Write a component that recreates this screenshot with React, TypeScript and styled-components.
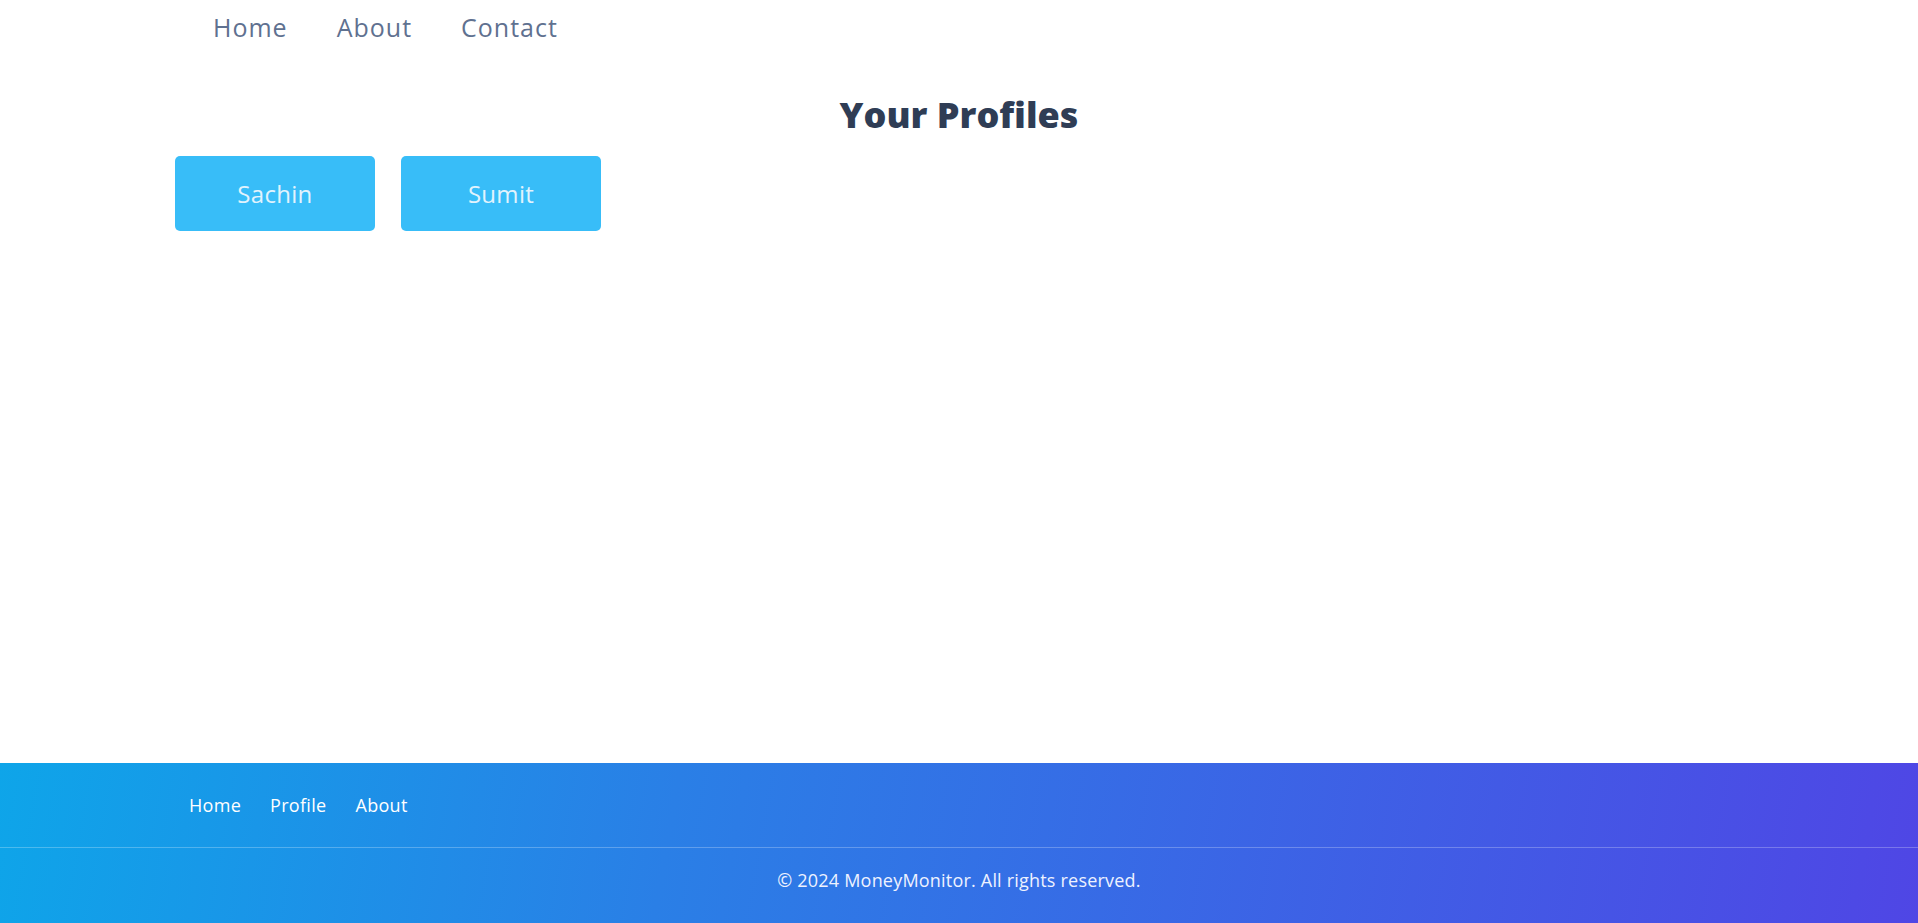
import React from "react";
import styled, { createGlobalStyle } from "styled-components";

const GlobalStyle = createGlobalStyle`
  html, body { margin: 0; padding: 0; background: #ffffff; }
  body { font-family: "Open Sans", "Noto Sans", Arial, sans-serif; }
  * { box-sizing: border-box; }
`;

const Page = styled.div`
  min-height: 100vh;
  display: flex;
  flex-direction: column;
`;

const Container = styled.div`
  max-width: 1600px;
  width: 100%;
  margin: 0 auto;
  padding: 0 16px;
`;

const TopNav = styled.nav`
  display: flex;
  gap: 49px;
  padding: 7px 0 0 38px;
  height: 54px;
`;

const TopLink = styled.a`
  font-size: 25px;
  letter-spacing: 1px;
  color: #5f7190;
  text-decoration: none;
  line-height: 40px;
`;

const Main = styled.main`
  flex: 1;
`;

const Title = styled.h1`
  margin: 39px 0 19px;
  text-align: center;
  font-size: 36px;
  font-weight: 800;
  color: #2f3d55;
  line-height: 44px;
`;

const ProfileList = styled.div`
  display: flex;
  gap: 26px;
`;

const ProfileButton = styled.button`
  width: 200px;
  height: 75px;
  border: none;
  border-radius: 5px;
  background: #38bdf8;
  color: #e2f3fd;
  font-family: inherit;
  font-size: 24px;
  letter-spacing: 0.3px;
  cursor: pointer;
`;

const Footer = styled.footer`
  background: linear-gradient(100deg, #0ea5e9 0%, #2a7fe6 35%, #4f46e5 100%);
  color: #ffffff;
`;

const FooterTop = styled.div`
  height: 85px;
  display: flex;
  align-items: center;
  border-bottom: 1px solid rgba(255, 255, 255, 0.25);
`;

const FooterLinks = styled.div`
  display: flex;
  gap: 29px;
  padding-left: 14px;
`;

const FooterLink = styled.a`
  color: #ffffff;
  text-decoration: none;
  font-size: 18px;
  letter-spacing: 0.3px;
`;

const Copyright = styled.div`
  height: 75px;
  padding-bottom: 12px;
  display: flex;
  align-items: center;
  justify-content: center;
  font-size: 18px;
  letter-spacing: 0.2px;
  color: #eef2ff;
`;

export default function App() {
  return (
    <Page>
      <GlobalStyle />
      <Container>
        <TopNav>
          <TopLink href="#">Home</TopLink>
          <TopLink href="#">About</TopLink>
          <TopLink href="#">Contact</TopLink>
        </TopNav>
      </Container>
      <Main>
        <Container>
          <Title>Your Profiles</Title>
          <ProfileList>
            <ProfileButton>Sachin</ProfileButton>
            <ProfileButton>Sumit</ProfileButton>
          </ProfileList>
        </Container>
      </Main>
      <Footer>
        <FooterTop>
          <Container>
            <FooterLinks>
              <FooterLink href="#">Home</FooterLink>
              <FooterLink href="#">Profile</FooterLink>
              <FooterLink href="#">About</FooterLink>
            </FooterLinks>
          </Container>
        </FooterTop>
        <Copyright>© 2024 MoneyMonitor. All rights reserved.</Copyright>
      </Footer>
    </Page>
  );
}
